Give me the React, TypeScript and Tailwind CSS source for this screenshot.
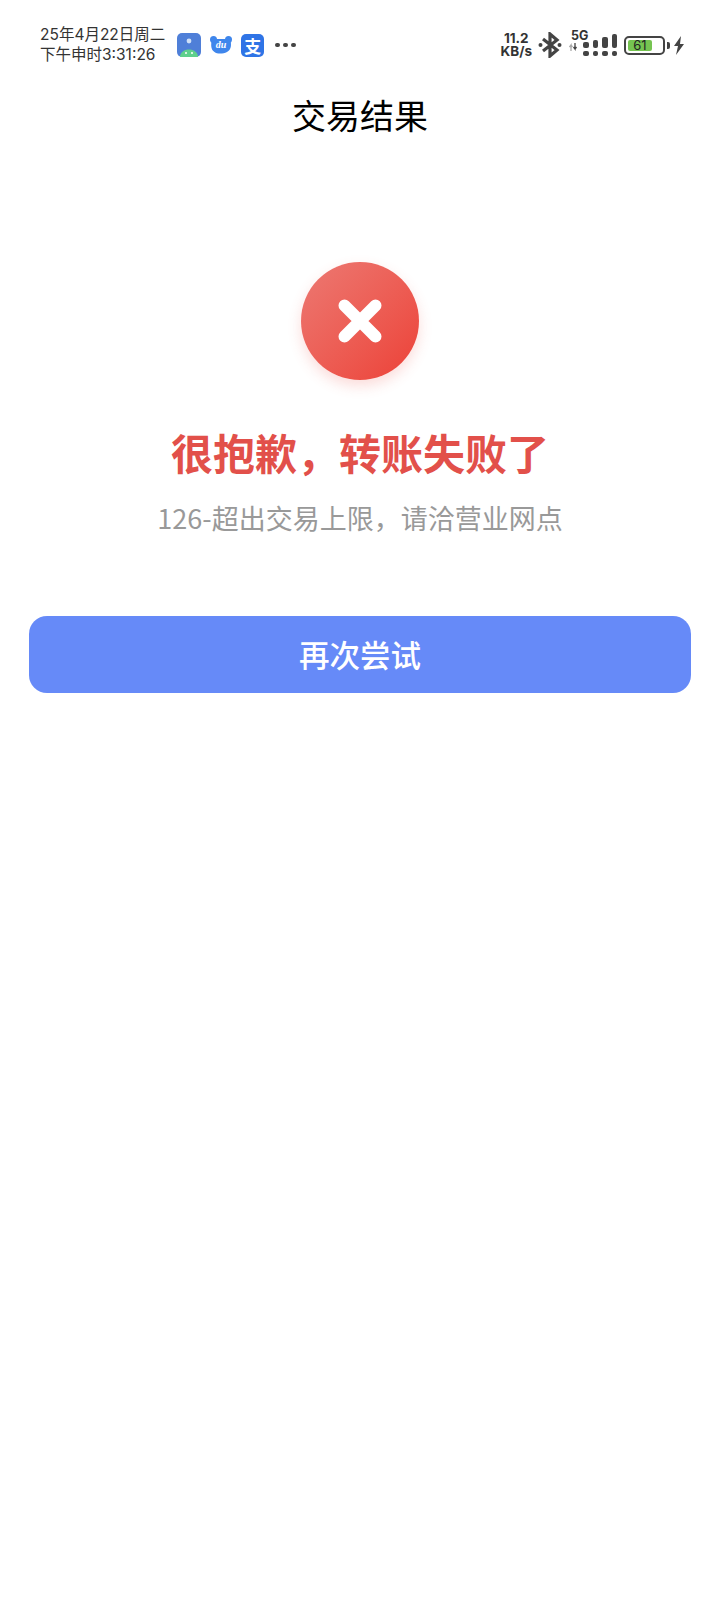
const cjk = { fontFamily: '"Noto Sans CJK SC", sans-serif' }
const statusFont = { fontFamily: 'Inter, "Noto Sans CJK SC", sans-serif' }

function AppIcons() {
  return (
    <div className="flex items-center ml-[12px]">
      {/* launcher app */}
      <svg width="24" height="24" viewBox="0 0 24 24">
        <rect width="24" height="24" rx="5" fill="#4f7fd8" />
        <path d="M3 24 C 3 14 21 14 21 24 Z" fill="#5fd08c" />
        <circle cx="12" cy="8" r="2.4" fill="#cfe0f7" />
        <circle cx="9" cy="20" r="1" fill="#fff" />
        <circle cx="15" cy="20" r="1" fill="#fff" />
      </svg>
      {/* du bear */}
      <svg width="24" height="24" viewBox="0 0 24 24" className="ml-[8px]">
        <circle cx="4.5" cy="6.5" r="3.5" fill="#3f86ec" />
        <circle cx="19.5" cy="6.5" r="3.5" fill="#3f86ec" />
        <path d="M3 6 H21 C23 12 22 17 18 19 C14 21 8 21 5.5 19 C2 17 1.5 12 3 6 Z" fill="#3f86ec" />
        <text x="12" y="15" textAnchor="middle" fontSize="10" fontStyle="italic" fontWeight="700" fill="#fff" fontFamily="Liberation Serif, serif">du</text>
      </svg>
      {/* alipay */}
      <div className="ml-[8px] w-[23px] h-[23px] rounded-[5px] bg-[#2f74e6] flex items-center justify-center text-white text-[17px] font-bold leading-none" style={cjk}>
        支
      </div>
      <div className="flex items-center gap-[3.5px] ml-[11px]">
        <span className="w-[4.5px] h-[4.5px] rounded-full bg-[#444]" />
        <span className="w-[4.5px] h-[4.5px] rounded-full bg-[#444]" />
        <span className="w-[4.5px] h-[4.5px] rounded-full bg-[#444]" />
      </div>
    </div>
  )
}

function Signal() {
  const bars = [6, 8, 11, 14]
  return (
    <div className="relative w-[48px] h-[26px] ml-[7px] mb-[4px]">
      <span className="absolute left-[2px] top-[-1px] text-[12.5px] font-bold leading-[14px] text-[#333]" style={statusFont}>5G</span>
      <svg width="9" height="9" viewBox="0 0 9 9" className="absolute left-0 bottom-[5px]">
        <path d="M2 9 V3 L0.5 5 M2 3 L3.5 5" stroke="#aaa" strokeWidth="1.3" fill="none" />
        <path d="M6 1 V7 L4.5 5 M6 7 L7.5 5" stroke="#444" strokeWidth="1.3" fill="none" />
      </svg>
      <div className="absolute left-[14px] bottom-0 flex gap-[4px] items-end">
        {bars.map((h, i) => (
          <div key={i} className="flex flex-col gap-[3px] items-center">
            <span className="w-[5.5px] rounded-[2px] bg-[#444]" style={{ height: h }} />
            <span className="w-[5.5px] h-[5px] rounded-[2px] bg-[#444]" />
          </div>
        ))}
      </div>
    </div>
  )
}

function Battery() {
  return (
    <div className="flex items-center ml-[7px]">
      <div className="w-[41px] h-[19px] rounded-[5px] border-2 border-[#444] p-[2px]">
        <div className="w-[24px] h-full rounded-[2px] bg-[#76c451] flex items-center justify-center text-[13px] leading-none text-[#222]" style={statusFont}>
          61
        </div>
      </div>
      <span className="w-[3px] h-[7px] ml-[2px] rounded-r-[2px] bg-[#444]" />
      <svg width="12" height="19" viewBox="0 0 12 19" className="ml-[3px]">
        <path d="M8 0 L1 10 H5 L3 19 L11 8 H7 Z" fill="#444" />
      </svg>
    </div>
  )
}

export default function App() {
  return (
    <div className="w-[720px] h-[1600px] bg-white flex flex-col" style={cjk}>
      {/* status bar */}
      <div className="h-[78px] pl-[40px] pr-[35px] flex items-center justify-between pt-[12px]">
        <div className="flex items-center">
          <div className="text-[15.5px] leading-[20px] text-[#333] whitespace-nowrap" style={statusFont}>
            <div>25年4月22日周二</div>
            <div>下午申时3:31:26</div>
          </div>
          <AppIcons />
        </div>
        <div className="flex items-center">
          <div className="text-[13.5px] font-bold leading-[13px] text-[#333] text-center" style={statusFont}>
            <div>11.2</div>
            <div>KB/s</div>
          </div>
          <svg width="24" height="26" viewBox="0 0 24 26" className="ml-[6px]" fill="none">
            <path d="M5 7 L19 18 L12 24 V2 L19 8 L5 19" stroke="#444" strokeWidth="3.2" />
            <circle cx="2.5" cy="13" r="2" fill="#444" />
            <circle cx="21.5" cy="13" r="2" fill="#444" />
          </svg>
          <Signal />
          <Battery />
        </div>
      </div>

      {/* title */}
      <div className="h-[72px] flex items-center justify-center text-[34px] text-black">交易结果</div>

      {/* result */}
      <div className="flex flex-col items-center mt-[112px]">
        <div className="w-[118px] h-[118px] rounded-full bg-gradient-to-br from-[#ec7872] to-[#ec3f36] shadow-[0_6px_14px_rgba(236,80,70,0.2)] flex items-center justify-center">
          <svg width="46" height="46" viewBox="0 0 46 46">
            <path d="M7.5 7.5 L38.5 38.5 M38.5 7.5 L7.5 38.5" stroke="#fff" strokeWidth="12" strokeLinecap="round" />
          </svg>
        </div>
        <h1 className="mt-[40px] text-[42px] leading-[64px] font-bold text-[#e2504a]">很抱歉，转账失败了</h1>
        <p className="mt-[13px] text-[27px] leading-[42px] text-[#999]">126-超出交易上限，请洽营业网点</p>
      </div>

      <div className="px-[29px] mt-[77px]">
        <button className="w-full h-[77px] rounded-[18px] bg-[#668af8] text-white text-[30.5px] font-medium">再次尝试</button>
      </div>
    </div>
  )
}
